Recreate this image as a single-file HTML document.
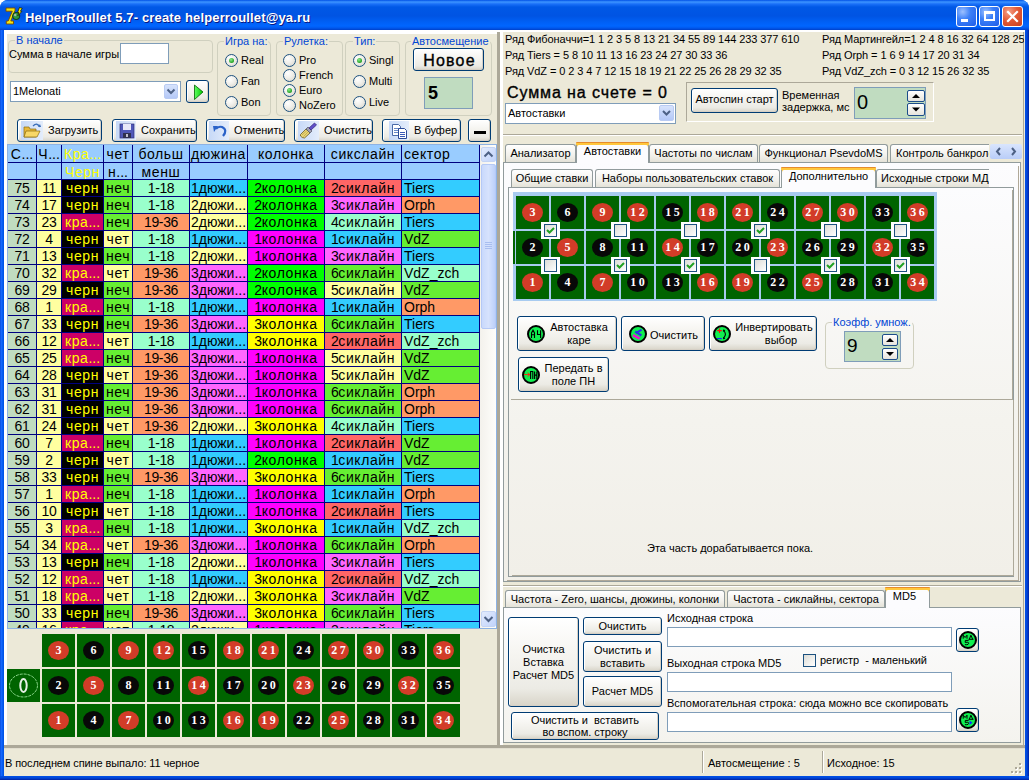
<!DOCTYPE html><html><head><meta charset="utf-8"><style>
*{box-sizing:border-box;margin:0;padding:0}
html,body{width:1029px;height:780px;overflow:hidden;background:#fff;font-family:'Liberation Sans',sans-serif}
.t{position:absolute;white-space:pre;font-family:'Liberation Sans',sans-serif;font-size:11px;line-height:13px}
.a{position:absolute}
.btn{position:absolute;border:1px solid #003C74;border-radius:3px;background:linear-gradient(#FFFFFF 0%,#F6F5F1 40%,#ECEBE5 80%,#D8D4C8 100%);box-shadow:inset -1px -1px 0 #D6D0C5, inset 1px 1px 0 #FFF}
.edit{position:absolute;border:1px solid #7F9DB9;background:#fff}
.grp{position:absolute;border:1px solid #D0D0BF;border-radius:4px}
.gt{position:absolute;white-space:pre;font-size:11px;line-height:13px;color:#0046D5;background:#ECE9D8;padding:0 1px}
.radio{position:absolute;width:13px;height:13px;border-radius:50%;border:1px solid #1C5180;background:radial-gradient(circle at 35% 30%,#FFFFFF 0%,#F0EFEA 45%,#D5D3C8 100%)}
.radio.on::after{content:'';position:absolute;left:3px;top:3px;width:5px;height:5px;border-radius:50%;background:radial-gradient(circle at 40% 35%,#8CEB8C,#21A121 70%,#1A8A1A)}
.combo-btn{position:absolute;border-radius:2px;background:linear-gradient(#D7E3FC,#B4C8F7);border:1px solid #B9CBF3}
.tab{position:absolute;border:1px solid #919B9C;border-bottom:none;border-radius:3px 3px 0 0;background:linear-gradient(#FFFFFF,#F2F1EC 60%,#E4E2D8);}
.tab.act{background:#FCFCFE;border-top:none;box-shadow:inset 0 3px 0 #FFC83C, inset 0 1px 0 #E68B2C}
.cell{position:absolute;width:33px;height:33px;background:#006400}
.chip{position:absolute;left:6px;top:7px;width:21px;height:19px;border-radius:50%}
.num{position:absolute;left:0;top:0px;width:33px;height:33px;text-align:center;color:#fff;font:bold 12px/33px 'Liberation Serif',serif;letter-spacing:2.5px;padding-left:2.5px}
.gc{position:absolute;white-space:pre;overflow:hidden;font-size:14px;line-height:16px;text-align:center}
.d{letter-spacing:-0.4px}
.cy{letter-spacing:0.6px}
</style></head><body><div class="a" style="left:0;top:0;width:1029px;height:780px;border-radius:8px 8px 0 0;overflow:hidden;background:#0055E5">
<div style="position:absolute;left:0px;top:0px;width:1029px;height:30px;background:linear-gradient(#0050E6 0px,#3D95FF 2px,#1A70F8 4px,#0058E6 7px,#0054E3 16px,#0060F5 22px,#0066FF 26px,#0058EE 28px,#0040C8 30px)"></div>
<div style="position:absolute;left:0px;top:30px;width:4px;height:750px;background:linear-gradient(to right,#0040D0,#1C6CFF 1px,#0058EE 3px,#0050E0)"></div>
<div style="position:absolute;left:1025px;top:30px;width:4px;height:750px;background:linear-gradient(to right,#0050E8,#0046D8 2px,#001FA0 4px)"></div>
<div style="position:absolute;left:0px;top:776px;width:1029px;height:4px;background:linear-gradient(#0050E8,#0046D8 2px,#0020A0 4px)"></div>
</div>
<svg class="a" style="left:0;top:0" width="30" height="30" viewBox="0 0 30 30">
<path d="M6 8 H15 V10.5 L10.8 21 H13.5 V24 H6.3 V21 H8.2 L12.3 11.2 H6 Z" fill="#F4E410" stroke="#7A4A00" stroke-width="0.9"/>
<circle cx="16.2" cy="16" r="3.6" fill="#2E9A3E" stroke="#102A10" stroke-width="0.9"/>
<circle cx="15.2" cy="15" r="1.2" fill="#A8B8A8"/>
<path d="M19.5 7.5 L22.2 8.3 L20.4 11.2 L21.8 11.5 L17.8 15.8 L19 12.6 L17.6 12.4 Z" fill="#FFF000" stroke="#101000" stroke-width="0.7"/>
</svg>
<div class="t" style="left:26px;top:11px;font:bold 13px/16px 'Liberation Sans';letter-spacing:0.15px;color:#0A1883">HelperRoullet 5.7- create helperroullet@ya.ru</div>
<div class="t" style="left:25px;top:10px;font:bold 13px/16px 'Liberation Sans';letter-spacing:0.15px;color:#fff">HelperRoullet 5.7- create helperroullet@ya.ru</div>
<div style="position:absolute;left:956px;top:6px;width:21px;height:21px;border:1px solid #fff;border-radius:3px;background:radial-gradient(circle at 30% 25%,#9CC0FF 0%,#3C80F8 40%,#1E5CE8 100%)"></div>
<div style="position:absolute;left:979px;top:6px;width:21px;height:21px;border:1px solid #fff;border-radius:3px;background:radial-gradient(circle at 30% 25%,#9CC0FF 0%,#3C80F8 40%,#1E5CE8 100%)"></div>
<div style="position:absolute;left:1002px;top:6px;width:21px;height:21px;border:1px solid #fff;border-radius:3px;background:radial-gradient(circle at 30% 25%,#F4A088 0%,#E35A36 45%,#C8401E 100%)"></div>
<div style="position:absolute;left:961px;top:19px;width:7px;height:3px;background:#fff"></div>
<div style="position:absolute;left:984px;top:11px;width:11px;height:10px;border:2px solid #fff;border-top-width:3px"></div>
<svg class="a" style="left:1002px;top:6px" width="21" height="21"><path d="M6 6 L15 15 M15 6 L6 15" stroke="#fff" stroke-width="2.2" stroke-linecap="square"/></svg>
<div style="position:absolute;left:4px;top:30px;width:1021px;height:746px;background:#ECE9D8"></div>
<div style="position:absolute;left:4px;top:30px;width:496px;height:4px;background:#FFFFFF"></div>
<div style="position:absolute;left:4px;top:30px;width:3px;height:718px;background:#FFFFFF"></div>
<div style="position:absolute;left:497px;top:32px;width:3px;height:716px;background:#ACA899"></div>
<div style="position:absolute;left:4px;top:745px;width:496px;height:3px;background:#ACA899"></div>
<div style="position:absolute;left:500px;top:30px;width:525px;height:2px;background:#FFFFFF"></div>
<div style="position:absolute;left:500px;top:30px;width:3px;height:718px;background:#FFFFFF"></div>
<div style="position:absolute;left:1023px;top:32px;width:1px;height:716px;background:#ACA899"></div>
<div style="position:absolute;left:500px;top:745px;width:525px;height:3px;background:#ACA899"></div>
<div class="grp" style="left:8px;top:40px;width:205px;height:33px"></div>
<div class="gt" style="left:15px;top:34px">В начале</div>
<div class="t" style="left:9px;top:48px;font-size:11px;line-height:13px;color:#000;font-weight:normal;">Сумма в начале игры</div>
<div class="edit" style="left:120px;top:43px;width:49px;height:21px"></div>
<div class="edit" style="left:10px;top:81px;width:171px;height:21px"></div>
<div class="t" style="left:13px;top:85px;font-size:11px;line-height:13px;color:#000;font-weight:normal;">1Melonati</div>
<div class="combo-btn" style="left:164px;top:84px;width:14px;height:15px"></div>
<svg class="a" style="left:164px;top:84px" width="14" height="15"><path d="M3.5 5.5 L7.0 9.0 L10.5 5.5" fill="none" stroke="#4D6185" stroke-width="2"/></svg>
<div class="btn" style="left:186px;top:80px;width:23px;height:23px"></div>
<svg class="a" style="left:186px;top:80px" width="23" height="23"><defs><linearGradient id="pg" x1="0" x2="1"><stop offset="0" stop-color="#60FF60"/><stop offset="1" stop-color="#00C800"/></linearGradient></defs><path d="M8.5 5 L17 12 L8.5 19.5 Z" fill="url(#pg)" stroke="#006000" stroke-width="0.8"/></svg>
<div class="grp" style="left:217px;top:41px;width:54px;height:75px"></div>
<div class="gt" style="left:224px;top:35px">Игра на:</div>
<div class="radio on" style="left:225px;top:54px"></div>
<div class="t" style="left:241px;top:54px;font-size:11px;line-height:13px;color:#000;font-weight:normal;">Real</div>
<div class="radio" style="left:225px;top:75px"></div>
<div class="t" style="left:241px;top:75px;font-size:11px;line-height:13px;color:#000;font-weight:normal;">Fan</div>
<div class="radio" style="left:225px;top:96px"></div>
<div class="t" style="left:241px;top:96px;font-size:11px;line-height:13px;color:#000;font-weight:normal;">Bon</div>
<div class="grp" style="left:276px;top:41px;width:67px;height:75px"></div>
<div class="gt" style="left:283px;top:35px">Рулетка:</div>
<div class="radio" style="left:283px;top:54px"></div>
<div class="t" style="left:299px;top:54px;font-size:11px;line-height:13px;color:#000;font-weight:normal;">Pro</div>
<div class="radio" style="left:283px;top:69px"></div>
<div class="t" style="left:299px;top:69px;font-size:11px;line-height:13px;color:#000;font-weight:normal;">French</div>
<div class="radio on" style="left:283px;top:84px"></div>
<div class="t" style="left:299px;top:84px;font-size:11px;line-height:13px;color:#000;font-weight:normal;">Euro</div>
<div class="radio" style="left:283px;top:99px"></div>
<div class="t" style="left:299px;top:99px;font-size:11px;line-height:13px;color:#000;font-weight:normal;">NoZero</div>
<div class="grp" style="left:345px;top:41px;width:55px;height:75px"></div>
<div class="gt" style="left:353px;top:35px">Тип:</div>
<div class="radio on" style="left:353px;top:54px"></div>
<div class="t" style="left:369px;top:54px;font-size:11px;line-height:13px;color:#000;font-weight:normal;">Singl</div>
<div class="radio" style="left:353px;top:75px"></div>
<div class="t" style="left:369px;top:75px;font-size:11px;line-height:13px;color:#000;font-weight:normal;">Multi</div>
<div class="radio" style="left:353px;top:96px"></div>
<div class="t" style="left:369px;top:96px;font-size:11px;line-height:13px;color:#000;font-weight:normal;">Live</div>
<div class="grp" style="left:405px;top:41px;width:87px;height:75px"></div>
<div class="gt" style="left:411px;top:35px">Автосмещение</div>
<div class="btn" style="left:413px;top:48px;width:71px;height:23px"></div>
<div class="t" style="left:413px;top:51px;width:71px;text-align:center;font:16px/20px 'Liberation Sans';letter-spacing:1.2px;padding-left:2px;-webkit-text-stroke:0.35px #000">Новое</div>
<div class="a" style="left:424px;top:77px;width:49px;height:32px;background:#C0DCC0;border:1px solid #7F9DB9"></div>
<div class="t" style="left:428px;top:83px;font:bold 18px/20px 'Liberation Sans'">5</div>
<div class="btn" style="left:17px;top:119px;width:85px;height:23px"></div>
<div class="a" style="left:21px;top:121px;width:22px;height:19px;background:linear-gradient(to right,#C7D9F7,#E4EDFB)"></div>
<svg class="a" style="left:21px;top:121px" width="22" height="19"><path d="M3 6 L8 6 L9 8 L15 8 L15 16 L3 16 Z" fill="#E8B83A" stroke="#8A6A10" stroke-width="0.7"/><path d="M5 10 L19 10 L16 16 L3 16 Z" fill="#F8D868" stroke="#8A6A10" stroke-width="0.7"/><path d="M12 5 Q16 1 19 6" fill="none" stroke="#3A6EB8" stroke-width="1.3"/><path d="M17 6 L20 6 L19 3" fill="#3A6EB8"/></svg>
<div class="t" style="left:48px;top:124px;font-size:11px;line-height:13px;color:#000;font-weight:normal;">Загрузить</div>
<div class="btn" style="left:112px;top:119px;width:85px;height:23px"></div>
<div class="a" style="left:116px;top:121px;width:20px;height:19px;background:linear-gradient(to right,#C7D9F7,#E4EDFB)"></div>
<svg class="a" style="left:116px;top:121px" width="20" height="19"><rect x="4" y="3" width="14" height="14" fill="#5058B8" stroke="#30307A" stroke-width="0.7"/><rect x="7" y="3" width="8" height="6" fill="#E8E8F8"/><rect x="7" y="12" width="8" height="5" fill="#303050"/><rect x="10" y="13" width="2" height="3" fill="#C0C0D0"/></svg>
<div class="t" style="left:141px;top:124px;font-size:11px;line-height:13px;color:#000;font-weight:normal;">Сохранить</div>
<div class="btn" style="left:206px;top:119px;width:79px;height:23px"></div>
<div class="a" style="left:209px;top:121px;width:20px;height:19px;background:linear-gradient(to right,#C7D9F7,#E4EDFB)"></div>
<svg class="a" style="left:209px;top:121px" width="20" height="19"><path d="M14 15 Q19 9 13 6 Q9 5 7 8" fill="none" stroke="#2A62C8" stroke-width="2.2"/><path d="M4 5 L9 5 L5 11 Z" fill="#2A62C8"/></svg>
<div class="t" style="left:234px;top:124px;font-size:11px;line-height:13px;color:#000;font-weight:normal;">Отменить</div>
<div class="btn" style="left:294px;top:119px;width:79px;height:23px"></div>
<div class="a" style="left:298px;top:121px;width:21px;height:19px;background:linear-gradient(to right,#C7D9F7,#E4EDFB)"></div>
<svg class="a" style="left:298px;top:121px" width="21" height="19"><path d="M2.5 13.5 L8 8 L12 12 L6.5 17 Q4 17 2.5 15 Z" fill="#E8D478" stroke="#6A5A20" stroke-width="0.8"/><path d="M4 14 L9 9.5 M5.5 15.5 L10 11" stroke="#B8A040" stroke-width="0.7"/><path d="M8 8 L10 6 L14 10 L12 12 Z" fill="#A0A0B0" stroke="#505060" stroke-width="0.7"/><path d="M11 7 L16.5 2 L18.5 4 L13 9 Z" fill="#6050C8" stroke="#302080" stroke-width="0.7"/></svg>
<div class="t" style="left:324px;top:124px;font-size:11px;line-height:13px;color:#000;font-weight:normal;">Очистить</div>
<div class="btn" style="left:382px;top:119px;width:79px;height:23px"></div>
<div class="a" style="left:389px;top:121px;width:20px;height:19px;background:linear-gradient(to right,#C7D9F7,#E4EDFB)"></div>
<svg class="a" style="left:389px;top:121px" width="20" height="19"><path d="M3.5 3.5 H9.5 L11.5 5.5 V14.5 H3.5 Z" fill="#fff" stroke="#4A6AA8" stroke-width="1"/><path d="M5 7.5 H10 M5 9.5 H10 M5 11.5 H10" stroke="#6A8AC8" stroke-width="1"/><path d="M9.5 7.5 H15.5 L17.5 9.5 V17.5 H9.5 Z" fill="#fff" stroke="#2A4A98" stroke-width="1"/><path d="M11 11.5 H16 M11 13.5 H16 M11 15.5 H16" stroke="#3A5AB8" stroke-width="1"/></svg>
<div class="t" style="left:414px;top:124px;font-size:11px;line-height:13px;color:#000;font-weight:normal;">В буфер</div>
<div class="btn" style="left:468px;top:119px;width:23px;height:23px"></div>
<div style="position:absolute;left:474px;top:131px;width:12px;height:3px;background:#000"></div>
<div class="a" style="left:7px;top:144px;width:490px;height:485px;background:#F4F3EE;border:1px solid #8DB2E3;overflow:hidden">
</div>
<div style="position:absolute;left:8px;top:145px;width:471px;height:34px;background:#99CCFF"></div>
<div class="gc" style="left:8px;top:145px;width:28px;height:17px;background:#99CCFF;color:#000;text-align:center;padding-top:1px;"><span class="cy">С</span>...</div>
<div class="gc" style="left:37px;top:145px;width:24px;height:17px;background:#99CCFF;color:#000;text-align:center;padding-top:1px;"><span class="cy">Ч</span>...</div>
<div class="gc" style="left:62px;top:145px;width:41px;height:17px;background:#99CCFF;color:#FFFF00;text-align:center;padding-top:1px;"><span class="cy">Кра</span>...</div>
<div class="gc" style="left:104px;top:145px;width:28px;height:17px;background:#99CCFF;color:#000;text-align:center;padding-top:1px;"><span class="cy">чет</span></div>
<div class="gc" style="left:133px;top:145px;width:56px;height:17px;background:#99CCFF;color:#000;text-align:center;padding-top:1px;"><span class="cy">больш</span></div>
<div class="gc" style="left:190px;top:145px;width:57px;height:17px;background:#99CCFF;color:#000;text-align:center;padding-top:1px;"><span class="cy">дюжина</span></div>
<div class="gc" style="left:248px;top:145px;width:76px;height:17px;background:#99CCFF;color:#000;text-align:center;padding-top:1px;"><span class="cy">колонка</span></div>
<div class="gc" style="left:325px;top:145px;width:76px;height:17px;background:#99CCFF;color:#000;text-align:center;padding-top:1px;"><span class="cy">сикслайн</span></div>
<div class="gc" style="left:402px;top:145px;width:77px;height:17px;background:#99CCFF;color:#000;text-align:left;padding-left:2px;padding-top:1px;"><span class="cy">сектор</span></div>
<div class="gc" style="left:8px;top:163px;width:28px;height:16px;background:#99CCFF;color:#000;text-align:center;padding-top:1px;"></div>
<div class="gc" style="left:37px;top:163px;width:24px;height:16px;background:#99CCFF;color:#000;text-align:center;padding-top:1px;"></div>
<div class="gc" style="left:62px;top:163px;width:41px;height:16px;background:#99CCFF;color:#FFFF00;text-align:center;padding-top:1px;"><span class="cy">Черн</span></div>
<div class="gc" style="left:104px;top:163px;width:28px;height:16px;background:#99CCFF;color:#000;text-align:center;padding-top:1px;"><span class="cy">н</span>...</div>
<div class="gc" style="left:133px;top:163px;width:56px;height:16px;background:#99CCFF;color:#000;text-align:center;padding-top:1px;"><span class="cy">менш</span></div>
<div class="gc" style="left:190px;top:163px;width:57px;height:16px;background:#99CCFF;color:#000;text-align:center;padding-top:1px;"></div>
<div class="gc" style="left:248px;top:163px;width:76px;height:16px;background:#99CCFF;color:#000;text-align:center;padding-top:1px;"></div>
<div class="gc" style="left:325px;top:163px;width:76px;height:16px;background:#99CCFF;color:#000;text-align:center;padding-top:1px;"></div>
<div class="gc" style="left:402px;top:163px;width:77px;height:16px;background:#99CCFF;color:#000;text-align:left;padding-left:2px;padding-top:1px;"></div>
<div class="gc" style="left:8px;top:180px;width:28px;height:16px;background:#C0DCC0;color:#000;text-align:center;"><span class="d">75</span></div>
<div class="gc" style="left:37px;top:180px;width:24px;height:16px;background:#FFFFA0;color:#000;text-align:center;"><span class="d">11</span></div>
<div class="gc" style="left:62px;top:180px;width:41px;height:16px;background:#000000;color:#FFFF00;text-align:center;"><span class="cy">черн</span></div>
<div class="gc" style="left:104px;top:180px;width:28px;height:16px;background:#66EE33;color:#000;text-align:center;"><span class="cy">неч</span></div>
<div class="gc" style="left:133px;top:180px;width:56px;height:16px;background:#99FFCC;color:#000;text-align:center;"><span class="d">1-18</span></div>
<div class="gc" style="left:190px;top:180px;width:57px;height:16px;background:#33CCFF;color:#000;text-align:center;">1дюжи...</div>
<div class="gc" style="left:248px;top:180px;width:76px;height:16px;background:#00FF00;color:#000;text-align:center;"><span class="d">2</span><span class="cy">колонка</span></div>
<div class="gc" style="left:325px;top:180px;width:76px;height:16px;background:#FF6666;color:#000;text-align:center;"><span class="d">2</span><span class="cy">сиклайн</span></div>
<div class="gc" style="left:402px;top:180px;width:77px;height:16px;background:#33CCFF;color:#000;text-align:left;padding-left:2px;">Tiers</div>
<div class="gc" style="left:8px;top:197px;width:28px;height:16px;background:#C0DCC0;color:#000;text-align:center;"><span class="d">74</span></div>
<div class="gc" style="left:37px;top:197px;width:24px;height:16px;background:#FFFFA0;color:#000;text-align:center;"><span class="d">17</span></div>
<div class="gc" style="left:62px;top:197px;width:41px;height:16px;background:#000000;color:#FFFF00;text-align:center;"><span class="cy">черн</span></div>
<div class="gc" style="left:104px;top:197px;width:28px;height:16px;background:#66EE33;color:#000;text-align:center;"><span class="cy">неч</span></div>
<div class="gc" style="left:133px;top:197px;width:56px;height:16px;background:#99FFCC;color:#000;text-align:center;"><span class="d">1-18</span></div>
<div class="gc" style="left:190px;top:197px;width:57px;height:16px;background:#FFFFA0;color:#000;text-align:center;">2дюжи...</div>
<div class="gc" style="left:248px;top:197px;width:76px;height:16px;background:#00FF00;color:#000;text-align:center;"><span class="d">2</span><span class="cy">колонка</span></div>
<div class="gc" style="left:325px;top:197px;width:76px;height:16px;background:#FF66FF;color:#000;text-align:center;"><span class="d">3</span><span class="cy">сиклайн</span></div>
<div class="gc" style="left:402px;top:197px;width:77px;height:16px;background:#FF9966;color:#000;text-align:left;padding-left:2px;">Orph</div>
<div class="gc" style="left:8px;top:214px;width:28px;height:16px;background:#C0DCC0;color:#000;text-align:center;"><span class="d">73</span></div>
<div class="gc" style="left:37px;top:214px;width:24px;height:16px;background:#FFFFA0;color:#000;text-align:center;"><span class="d">23</span></div>
<div class="gc" style="left:62px;top:214px;width:41px;height:16px;background:#CC0066;color:#FFFF00;text-align:center;"><span class="cy">кра</span>...</div>
<div class="gc" style="left:104px;top:214px;width:28px;height:16px;background:#66EE33;color:#000;text-align:center;"><span class="cy">неч</span></div>
<div class="gc" style="left:133px;top:214px;width:56px;height:16px;background:#FF9966;color:#000;text-align:center;"><span class="d">19-36</span></div>
<div class="gc" style="left:190px;top:214px;width:57px;height:16px;background:#FFFFA0;color:#000;text-align:center;">2дюжи...</div>
<div class="gc" style="left:248px;top:214px;width:76px;height:16px;background:#00FF00;color:#000;text-align:center;"><span class="d">2</span><span class="cy">колонка</span></div>
<div class="gc" style="left:325px;top:214px;width:76px;height:16px;background:#99FFCC;color:#000;text-align:center;"><span class="d">4</span><span class="cy">сиклайн</span></div>
<div class="gc" style="left:402px;top:214px;width:77px;height:16px;background:#33CCFF;color:#000;text-align:left;padding-left:2px;">Tiers</div>
<div class="gc" style="left:8px;top:231px;width:28px;height:16px;background:#C0DCC0;color:#000;text-align:center;"><span class="d">72</span></div>
<div class="gc" style="left:37px;top:231px;width:24px;height:16px;background:#FFFFA0;color:#000;text-align:center;"><span class="d">4</span></div>
<div class="gc" style="left:62px;top:231px;width:41px;height:16px;background:#000000;color:#FFFF00;text-align:center;"><span class="cy">черн</span></div>
<div class="gc" style="left:104px;top:231px;width:28px;height:16px;background:#FFFFA0;color:#000;text-align:center;"><span class="cy">чет</span></div>
<div class="gc" style="left:133px;top:231px;width:56px;height:16px;background:#99FFCC;color:#000;text-align:center;"><span class="d">1-18</span></div>
<div class="gc" style="left:190px;top:231px;width:57px;height:16px;background:#33CCFF;color:#000;text-align:center;">1дюжи...</div>
<div class="gc" style="left:248px;top:231px;width:76px;height:16px;background:#FF00FF;color:#000;text-align:center;"><span class="d">1</span><span class="cy">колонка</span></div>
<div class="gc" style="left:325px;top:231px;width:76px;height:16px;background:#33CCFF;color:#000;text-align:center;"><span class="d">1</span><span class="cy">сиклайн</span></div>
<div class="gc" style="left:402px;top:231px;width:77px;height:16px;background:#66EE33;color:#000;text-align:left;padding-left:2px;">VdZ</div>
<div class="gc" style="left:8px;top:248px;width:28px;height:16px;background:#C0DCC0;color:#000;text-align:center;"><span class="d">71</span></div>
<div class="gc" style="left:37px;top:248px;width:24px;height:16px;background:#FFFFA0;color:#000;text-align:center;"><span class="d">13</span></div>
<div class="gc" style="left:62px;top:248px;width:41px;height:16px;background:#000000;color:#FFFF00;text-align:center;"><span class="cy">черн</span></div>
<div class="gc" style="left:104px;top:248px;width:28px;height:16px;background:#66EE33;color:#000;text-align:center;"><span class="cy">неч</span></div>
<div class="gc" style="left:133px;top:248px;width:56px;height:16px;background:#99FFCC;color:#000;text-align:center;"><span class="d">1-18</span></div>
<div class="gc" style="left:190px;top:248px;width:57px;height:16px;background:#FFFFA0;color:#000;text-align:center;">2дюжи...</div>
<div class="gc" style="left:248px;top:248px;width:76px;height:16px;background:#FF00FF;color:#000;text-align:center;"><span class="d">1</span><span class="cy">колонка</span></div>
<div class="gc" style="left:325px;top:248px;width:76px;height:16px;background:#FF66FF;color:#000;text-align:center;"><span class="d">3</span><span class="cy">сиклайн</span></div>
<div class="gc" style="left:402px;top:248px;width:77px;height:16px;background:#33CCFF;color:#000;text-align:left;padding-left:2px;">Tiers</div>
<div class="gc" style="left:8px;top:265px;width:28px;height:16px;background:#C0DCC0;color:#000;text-align:center;"><span class="d">70</span></div>
<div class="gc" style="left:37px;top:265px;width:24px;height:16px;background:#FFFFA0;color:#000;text-align:center;"><span class="d">32</span></div>
<div class="gc" style="left:62px;top:265px;width:41px;height:16px;background:#CC0066;color:#FFFF00;text-align:center;"><span class="cy">кра</span>...</div>
<div class="gc" style="left:104px;top:265px;width:28px;height:16px;background:#FFFFA0;color:#000;text-align:center;"><span class="cy">чет</span></div>
<div class="gc" style="left:133px;top:265px;width:56px;height:16px;background:#FF9966;color:#000;text-align:center;"><span class="d">19-36</span></div>
<div class="gc" style="left:190px;top:265px;width:57px;height:16px;background:#FF66FF;color:#000;text-align:center;">3дюжи...</div>
<div class="gc" style="left:248px;top:265px;width:76px;height:16px;background:#00FF00;color:#000;text-align:center;"><span class="d">2</span><span class="cy">колонка</span></div>
<div class="gc" style="left:325px;top:265px;width:76px;height:16px;background:#66EE33;color:#000;text-align:center;"><span class="d">6</span><span class="cy">сиклайн</span></div>
<div class="gc" style="left:402px;top:265px;width:77px;height:16px;background:#99FFCC;color:#000;text-align:left;padding-left:2px;">VdZ_zch</div>
<div class="gc" style="left:8px;top:282px;width:28px;height:16px;background:#C0DCC0;color:#000;text-align:center;"><span class="d">69</span></div>
<div class="gc" style="left:37px;top:282px;width:24px;height:16px;background:#FFFFA0;color:#000;text-align:center;"><span class="d">29</span></div>
<div class="gc" style="left:62px;top:282px;width:41px;height:16px;background:#000000;color:#FFFF00;text-align:center;"><span class="cy">черн</span></div>
<div class="gc" style="left:104px;top:282px;width:28px;height:16px;background:#66EE33;color:#000;text-align:center;"><span class="cy">неч</span></div>
<div class="gc" style="left:133px;top:282px;width:56px;height:16px;background:#FF9966;color:#000;text-align:center;"><span class="d">19-36</span></div>
<div class="gc" style="left:190px;top:282px;width:57px;height:16px;background:#FF66FF;color:#000;text-align:center;">3дюжи...</div>
<div class="gc" style="left:248px;top:282px;width:76px;height:16px;background:#00FF00;color:#000;text-align:center;"><span class="d">2</span><span class="cy">колонка</span></div>
<div class="gc" style="left:325px;top:282px;width:76px;height:16px;background:#FFFFA0;color:#000;text-align:center;"><span class="d">5</span><span class="cy">сиклайн</span></div>
<div class="gc" style="left:402px;top:282px;width:77px;height:16px;background:#66EE33;color:#000;text-align:left;padding-left:2px;">VdZ</div>
<div class="gc" style="left:8px;top:299px;width:28px;height:16px;background:#C0DCC0;color:#000;text-align:center;"><span class="d">68</span></div>
<div class="gc" style="left:37px;top:299px;width:24px;height:16px;background:#FFFFA0;color:#000;text-align:center;"><span class="d">1</span></div>
<div class="gc" style="left:62px;top:299px;width:41px;height:16px;background:#CC0066;color:#FFFF00;text-align:center;"><span class="cy">кра</span>...</div>
<div class="gc" style="left:104px;top:299px;width:28px;height:16px;background:#66EE33;color:#000;text-align:center;"><span class="cy">неч</span></div>
<div class="gc" style="left:133px;top:299px;width:56px;height:16px;background:#99FFCC;color:#000;text-align:center;"><span class="d">1-18</span></div>
<div class="gc" style="left:190px;top:299px;width:57px;height:16px;background:#33CCFF;color:#000;text-align:center;">1дюжи...</div>
<div class="gc" style="left:248px;top:299px;width:76px;height:16px;background:#FF00FF;color:#000;text-align:center;"><span class="d">1</span><span class="cy">колонка</span></div>
<div class="gc" style="left:325px;top:299px;width:76px;height:16px;background:#33CCFF;color:#000;text-align:center;"><span class="d">1</span><span class="cy">сиклайн</span></div>
<div class="gc" style="left:402px;top:299px;width:77px;height:16px;background:#FF9966;color:#000;text-align:left;padding-left:2px;">Orph</div>
<div class="gc" style="left:8px;top:316px;width:28px;height:16px;background:#C0DCC0;color:#000;text-align:center;"><span class="d">67</span></div>
<div class="gc" style="left:37px;top:316px;width:24px;height:16px;background:#FFFFA0;color:#000;text-align:center;"><span class="d">33</span></div>
<div class="gc" style="left:62px;top:316px;width:41px;height:16px;background:#000000;color:#FFFF00;text-align:center;"><span class="cy">черн</span></div>
<div class="gc" style="left:104px;top:316px;width:28px;height:16px;background:#66EE33;color:#000;text-align:center;"><span class="cy">неч</span></div>
<div class="gc" style="left:133px;top:316px;width:56px;height:16px;background:#FF9966;color:#000;text-align:center;"><span class="d">19-36</span></div>
<div class="gc" style="left:190px;top:316px;width:57px;height:16px;background:#FF66FF;color:#000;text-align:center;">3дюжи...</div>
<div class="gc" style="left:248px;top:316px;width:76px;height:16px;background:#FFFF00;color:#000;text-align:center;"><span class="d">3</span><span class="cy">колонка</span></div>
<div class="gc" style="left:325px;top:316px;width:76px;height:16px;background:#66EE33;color:#000;text-align:center;"><span class="d">6</span><span class="cy">сиклайн</span></div>
<div class="gc" style="left:402px;top:316px;width:77px;height:16px;background:#33CCFF;color:#000;text-align:left;padding-left:2px;">Tiers</div>
<div class="gc" style="left:8px;top:333px;width:28px;height:16px;background:#C0DCC0;color:#000;text-align:center;"><span class="d">66</span></div>
<div class="gc" style="left:37px;top:333px;width:24px;height:16px;background:#FFFFA0;color:#000;text-align:center;"><span class="d">12</span></div>
<div class="gc" style="left:62px;top:333px;width:41px;height:16px;background:#CC0066;color:#FFFF00;text-align:center;"><span class="cy">кра</span>...</div>
<div class="gc" style="left:104px;top:333px;width:28px;height:16px;background:#FFFFA0;color:#000;text-align:center;"><span class="cy">чет</span></div>
<div class="gc" style="left:133px;top:333px;width:56px;height:16px;background:#99FFCC;color:#000;text-align:center;"><span class="d">1-18</span></div>
<div class="gc" style="left:190px;top:333px;width:57px;height:16px;background:#33CCFF;color:#000;text-align:center;">1дюжи...</div>
<div class="gc" style="left:248px;top:333px;width:76px;height:16px;background:#FFFF00;color:#000;text-align:center;"><span class="d">3</span><span class="cy">колонка</span></div>
<div class="gc" style="left:325px;top:333px;width:76px;height:16px;background:#FF6666;color:#000;text-align:center;"><span class="d">2</span><span class="cy">сиклайн</span></div>
<div class="gc" style="left:402px;top:333px;width:77px;height:16px;background:#99FFCC;color:#000;text-align:left;padding-left:2px;">VdZ_zch</div>
<div class="gc" style="left:8px;top:350px;width:28px;height:16px;background:#C0DCC0;color:#000;text-align:center;"><span class="d">65</span></div>
<div class="gc" style="left:37px;top:350px;width:24px;height:16px;background:#FFFFA0;color:#000;text-align:center;"><span class="d">25</span></div>
<div class="gc" style="left:62px;top:350px;width:41px;height:16px;background:#CC0066;color:#FFFF00;text-align:center;"><span class="cy">кра</span>...</div>
<div class="gc" style="left:104px;top:350px;width:28px;height:16px;background:#66EE33;color:#000;text-align:center;"><span class="cy">неч</span></div>
<div class="gc" style="left:133px;top:350px;width:56px;height:16px;background:#FF9966;color:#000;text-align:center;"><span class="d">19-36</span></div>
<div class="gc" style="left:190px;top:350px;width:57px;height:16px;background:#FF66FF;color:#000;text-align:center;">3дюжи...</div>
<div class="gc" style="left:248px;top:350px;width:76px;height:16px;background:#FF00FF;color:#000;text-align:center;"><span class="d">1</span><span class="cy">колонка</span></div>
<div class="gc" style="left:325px;top:350px;width:76px;height:16px;background:#FFFFA0;color:#000;text-align:center;"><span class="d">5</span><span class="cy">сиклайн</span></div>
<div class="gc" style="left:402px;top:350px;width:77px;height:16px;background:#66EE33;color:#000;text-align:left;padding-left:2px;">VdZ</div>
<div class="gc" style="left:8px;top:367px;width:28px;height:16px;background:#C0DCC0;color:#000;text-align:center;"><span class="d">64</span></div>
<div class="gc" style="left:37px;top:367px;width:24px;height:16px;background:#FFFFA0;color:#000;text-align:center;"><span class="d">28</span></div>
<div class="gc" style="left:62px;top:367px;width:41px;height:16px;background:#000000;color:#FFFF00;text-align:center;"><span class="cy">черн</span></div>
<div class="gc" style="left:104px;top:367px;width:28px;height:16px;background:#FFFFA0;color:#000;text-align:center;"><span class="cy">чет</span></div>
<div class="gc" style="left:133px;top:367px;width:56px;height:16px;background:#FF9966;color:#000;text-align:center;"><span class="d">19-36</span></div>
<div class="gc" style="left:190px;top:367px;width:57px;height:16px;background:#FF66FF;color:#000;text-align:center;">3дюжи...</div>
<div class="gc" style="left:248px;top:367px;width:76px;height:16px;background:#FF00FF;color:#000;text-align:center;"><span class="d">1</span><span class="cy">колонка</span></div>
<div class="gc" style="left:325px;top:367px;width:76px;height:16px;background:#FFFFA0;color:#000;text-align:center;"><span class="d">5</span><span class="cy">сиклайн</span></div>
<div class="gc" style="left:402px;top:367px;width:77px;height:16px;background:#66EE33;color:#000;text-align:left;padding-left:2px;">VdZ</div>
<div class="gc" style="left:8px;top:384px;width:28px;height:16px;background:#C0DCC0;color:#000;text-align:center;"><span class="d">63</span></div>
<div class="gc" style="left:37px;top:384px;width:24px;height:16px;background:#FFFFA0;color:#000;text-align:center;"><span class="d">31</span></div>
<div class="gc" style="left:62px;top:384px;width:41px;height:16px;background:#000000;color:#FFFF00;text-align:center;"><span class="cy">черн</span></div>
<div class="gc" style="left:104px;top:384px;width:28px;height:16px;background:#66EE33;color:#000;text-align:center;"><span class="cy">неч</span></div>
<div class="gc" style="left:133px;top:384px;width:56px;height:16px;background:#FF9966;color:#000;text-align:center;"><span class="d">19-36</span></div>
<div class="gc" style="left:190px;top:384px;width:57px;height:16px;background:#FF66FF;color:#000;text-align:center;">3дюжи...</div>
<div class="gc" style="left:248px;top:384px;width:76px;height:16px;background:#FF00FF;color:#000;text-align:center;"><span class="d">1</span><span class="cy">колонка</span></div>
<div class="gc" style="left:325px;top:384px;width:76px;height:16px;background:#66EE33;color:#000;text-align:center;"><span class="d">6</span><span class="cy">сиклайн</span></div>
<div class="gc" style="left:402px;top:384px;width:77px;height:16px;background:#FF9966;color:#000;text-align:left;padding-left:2px;">Orph</div>
<div class="gc" style="left:8px;top:401px;width:28px;height:16px;background:#C0DCC0;color:#000;text-align:center;"><span class="d">62</span></div>
<div class="gc" style="left:37px;top:401px;width:24px;height:16px;background:#FFFFA0;color:#000;text-align:center;"><span class="d">31</span></div>
<div class="gc" style="left:62px;top:401px;width:41px;height:16px;background:#000000;color:#FFFF00;text-align:center;"><span class="cy">черн</span></div>
<div class="gc" style="left:104px;top:401px;width:28px;height:16px;background:#66EE33;color:#000;text-align:center;"><span class="cy">неч</span></div>
<div class="gc" style="left:133px;top:401px;width:56px;height:16px;background:#FF9966;color:#000;text-align:center;"><span class="d">19-36</span></div>
<div class="gc" style="left:190px;top:401px;width:57px;height:16px;background:#FF66FF;color:#000;text-align:center;">3дюжи...</div>
<div class="gc" style="left:248px;top:401px;width:76px;height:16px;background:#FF00FF;color:#000;text-align:center;"><span class="d">1</span><span class="cy">колонка</span></div>
<div class="gc" style="left:325px;top:401px;width:76px;height:16px;background:#66EE33;color:#000;text-align:center;"><span class="d">6</span><span class="cy">сиклайн</span></div>
<div class="gc" style="left:402px;top:401px;width:77px;height:16px;background:#FF9966;color:#000;text-align:left;padding-left:2px;">Orph</div>
<div class="gc" style="left:8px;top:418px;width:28px;height:16px;background:#C0DCC0;color:#000;text-align:center;"><span class="d">61</span></div>
<div class="gc" style="left:37px;top:418px;width:24px;height:16px;background:#FFFFA0;color:#000;text-align:center;"><span class="d">24</span></div>
<div class="gc" style="left:62px;top:418px;width:41px;height:16px;background:#000000;color:#FFFF00;text-align:center;"><span class="cy">черн</span></div>
<div class="gc" style="left:104px;top:418px;width:28px;height:16px;background:#FFFFA0;color:#000;text-align:center;"><span class="cy">чет</span></div>
<div class="gc" style="left:133px;top:418px;width:56px;height:16px;background:#FF9966;color:#000;text-align:center;"><span class="d">19-36</span></div>
<div class="gc" style="left:190px;top:418px;width:57px;height:16px;background:#FFFFA0;color:#000;text-align:center;">2дюжи...</div>
<div class="gc" style="left:248px;top:418px;width:76px;height:16px;background:#FFFF00;color:#000;text-align:center;"><span class="d">3</span><span class="cy">колонка</span></div>
<div class="gc" style="left:325px;top:418px;width:76px;height:16px;background:#99FFCC;color:#000;text-align:center;"><span class="d">4</span><span class="cy">сиклайн</span></div>
<div class="gc" style="left:402px;top:418px;width:77px;height:16px;background:#33CCFF;color:#000;text-align:left;padding-left:2px;">Tiers</div>
<div class="gc" style="left:8px;top:435px;width:28px;height:16px;background:#C0DCC0;color:#000;text-align:center;"><span class="d">60</span></div>
<div class="gc" style="left:37px;top:435px;width:24px;height:16px;background:#FFFFA0;color:#000;text-align:center;"><span class="d">7</span></div>
<div class="gc" style="left:62px;top:435px;width:41px;height:16px;background:#CC0066;color:#FFFF00;text-align:center;"><span class="cy">кра</span>...</div>
<div class="gc" style="left:104px;top:435px;width:28px;height:16px;background:#66EE33;color:#000;text-align:center;"><span class="cy">неч</span></div>
<div class="gc" style="left:133px;top:435px;width:56px;height:16px;background:#99FFCC;color:#000;text-align:center;"><span class="d">1-18</span></div>
<div class="gc" style="left:190px;top:435px;width:57px;height:16px;background:#33CCFF;color:#000;text-align:center;">1дюжи...</div>
<div class="gc" style="left:248px;top:435px;width:76px;height:16px;background:#FF00FF;color:#000;text-align:center;"><span class="d">1</span><span class="cy">колонка</span></div>
<div class="gc" style="left:325px;top:435px;width:76px;height:16px;background:#FF6666;color:#000;text-align:center;"><span class="d">2</span><span class="cy">сиклайн</span></div>
<div class="gc" style="left:402px;top:435px;width:77px;height:16px;background:#66EE33;color:#000;text-align:left;padding-left:2px;">VdZ</div>
<div class="gc" style="left:8px;top:452px;width:28px;height:16px;background:#C0DCC0;color:#000;text-align:center;"><span class="d">59</span></div>
<div class="gc" style="left:37px;top:452px;width:24px;height:16px;background:#FFFFA0;color:#000;text-align:center;"><span class="d">2</span></div>
<div class="gc" style="left:62px;top:452px;width:41px;height:16px;background:#000000;color:#FFFF00;text-align:center;"><span class="cy">черн</span></div>
<div class="gc" style="left:104px;top:452px;width:28px;height:16px;background:#FFFFA0;color:#000;text-align:center;"><span class="cy">чет</span></div>
<div class="gc" style="left:133px;top:452px;width:56px;height:16px;background:#99FFCC;color:#000;text-align:center;"><span class="d">1-18</span></div>
<div class="gc" style="left:190px;top:452px;width:57px;height:16px;background:#33CCFF;color:#000;text-align:center;">1дюжи...</div>
<div class="gc" style="left:248px;top:452px;width:76px;height:16px;background:#00FF00;color:#000;text-align:center;"><span class="d">2</span><span class="cy">колонка</span></div>
<div class="gc" style="left:325px;top:452px;width:76px;height:16px;background:#33CCFF;color:#000;text-align:center;"><span class="d">1</span><span class="cy">сиклайн</span></div>
<div class="gc" style="left:402px;top:452px;width:77px;height:16px;background:#66EE33;color:#000;text-align:left;padding-left:2px;">VdZ</div>
<div class="gc" style="left:8px;top:469px;width:28px;height:16px;background:#C0DCC0;color:#000;text-align:center;"><span class="d">58</span></div>
<div class="gc" style="left:37px;top:469px;width:24px;height:16px;background:#FFFFA0;color:#000;text-align:center;"><span class="d">33</span></div>
<div class="gc" style="left:62px;top:469px;width:41px;height:16px;background:#000000;color:#FFFF00;text-align:center;"><span class="cy">черн</span></div>
<div class="gc" style="left:104px;top:469px;width:28px;height:16px;background:#66EE33;color:#000;text-align:center;"><span class="cy">неч</span></div>
<div class="gc" style="left:133px;top:469px;width:56px;height:16px;background:#FF9966;color:#000;text-align:center;"><span class="d">19-36</span></div>
<div class="gc" style="left:190px;top:469px;width:57px;height:16px;background:#FF66FF;color:#000;text-align:center;">3дюжи...</div>
<div class="gc" style="left:248px;top:469px;width:76px;height:16px;background:#FFFF00;color:#000;text-align:center;"><span class="d">3</span><span class="cy">колонка</span></div>
<div class="gc" style="left:325px;top:469px;width:76px;height:16px;background:#66EE33;color:#000;text-align:center;"><span class="d">6</span><span class="cy">сиклайн</span></div>
<div class="gc" style="left:402px;top:469px;width:77px;height:16px;background:#33CCFF;color:#000;text-align:left;padding-left:2px;">Tiers</div>
<div class="gc" style="left:8px;top:486px;width:28px;height:16px;background:#C0DCC0;color:#000;text-align:center;"><span class="d">57</span></div>
<div class="gc" style="left:37px;top:486px;width:24px;height:16px;background:#FFFFA0;color:#000;text-align:center;"><span class="d">1</span></div>
<div class="gc" style="left:62px;top:486px;width:41px;height:16px;background:#CC0066;color:#FFFF00;text-align:center;"><span class="cy">кра</span>...</div>
<div class="gc" style="left:104px;top:486px;width:28px;height:16px;background:#66EE33;color:#000;text-align:center;"><span class="cy">неч</span></div>
<div class="gc" style="left:133px;top:486px;width:56px;height:16px;background:#99FFCC;color:#000;text-align:center;"><span class="d">1-18</span></div>
<div class="gc" style="left:190px;top:486px;width:57px;height:16px;background:#33CCFF;color:#000;text-align:center;">1дюжи...</div>
<div class="gc" style="left:248px;top:486px;width:76px;height:16px;background:#FF00FF;color:#000;text-align:center;"><span class="d">1</span><span class="cy">колонка</span></div>
<div class="gc" style="left:325px;top:486px;width:76px;height:16px;background:#33CCFF;color:#000;text-align:center;"><span class="d">1</span><span class="cy">сиклайн</span></div>
<div class="gc" style="left:402px;top:486px;width:77px;height:16px;background:#FF9966;color:#000;text-align:left;padding-left:2px;">Orph</div>
<div class="gc" style="left:8px;top:503px;width:28px;height:16px;background:#C0DCC0;color:#000;text-align:center;"><span class="d">56</span></div>
<div class="gc" style="left:37px;top:503px;width:24px;height:16px;background:#FFFFA0;color:#000;text-align:center;"><span class="d">10</span></div>
<div class="gc" style="left:62px;top:503px;width:41px;height:16px;background:#000000;color:#FFFF00;text-align:center;"><span class="cy">черн</span></div>
<div class="gc" style="left:104px;top:503px;width:28px;height:16px;background:#FFFFA0;color:#000;text-align:center;"><span class="cy">чет</span></div>
<div class="gc" style="left:133px;top:503px;width:56px;height:16px;background:#99FFCC;color:#000;text-align:center;"><span class="d">1-18</span></div>
<div class="gc" style="left:190px;top:503px;width:57px;height:16px;background:#33CCFF;color:#000;text-align:center;">1дюжи...</div>
<div class="gc" style="left:248px;top:503px;width:76px;height:16px;background:#FF00FF;color:#000;text-align:center;"><span class="d">1</span><span class="cy">колонка</span></div>
<div class="gc" style="left:325px;top:503px;width:76px;height:16px;background:#FF6666;color:#000;text-align:center;"><span class="d">2</span><span class="cy">сиклайн</span></div>
<div class="gc" style="left:402px;top:503px;width:77px;height:16px;background:#33CCFF;color:#000;text-align:left;padding-left:2px;">Tiers</div>
<div class="gc" style="left:8px;top:520px;width:28px;height:16px;background:#C0DCC0;color:#000;text-align:center;"><span class="d">55</span></div>
<div class="gc" style="left:37px;top:520px;width:24px;height:16px;background:#FFFFA0;color:#000;text-align:center;"><span class="d">3</span></div>
<div class="gc" style="left:62px;top:520px;width:41px;height:16px;background:#CC0066;color:#FFFF00;text-align:center;"><span class="cy">кра</span>...</div>
<div class="gc" style="left:104px;top:520px;width:28px;height:16px;background:#66EE33;color:#000;text-align:center;"><span class="cy">неч</span></div>
<div class="gc" style="left:133px;top:520px;width:56px;height:16px;background:#99FFCC;color:#000;text-align:center;"><span class="d">1-18</span></div>
<div class="gc" style="left:190px;top:520px;width:57px;height:16px;background:#33CCFF;color:#000;text-align:center;">1дюжи...</div>
<div class="gc" style="left:248px;top:520px;width:76px;height:16px;background:#FFFF00;color:#000;text-align:center;"><span class="d">3</span><span class="cy">колонка</span></div>
<div class="gc" style="left:325px;top:520px;width:76px;height:16px;background:#33CCFF;color:#000;text-align:center;"><span class="d">1</span><span class="cy">сиклайн</span></div>
<div class="gc" style="left:402px;top:520px;width:77px;height:16px;background:#99FFCC;color:#000;text-align:left;padding-left:2px;">VdZ_zch</div>
<div class="gc" style="left:8px;top:537px;width:28px;height:16px;background:#C0DCC0;color:#000;text-align:center;"><span class="d">54</span></div>
<div class="gc" style="left:37px;top:537px;width:24px;height:16px;background:#FFFFA0;color:#000;text-align:center;"><span class="d">34</span></div>
<div class="gc" style="left:62px;top:537px;width:41px;height:16px;background:#CC0066;color:#FFFF00;text-align:center;"><span class="cy">кра</span>...</div>
<div class="gc" style="left:104px;top:537px;width:28px;height:16px;background:#FFFFA0;color:#000;text-align:center;"><span class="cy">чет</span></div>
<div class="gc" style="left:133px;top:537px;width:56px;height:16px;background:#FF9966;color:#000;text-align:center;"><span class="d">19-36</span></div>
<div class="gc" style="left:190px;top:537px;width:57px;height:16px;background:#FF66FF;color:#000;text-align:center;">3дюжи...</div>
<div class="gc" style="left:248px;top:537px;width:76px;height:16px;background:#FF00FF;color:#000;text-align:center;"><span class="d">1</span><span class="cy">колонка</span></div>
<div class="gc" style="left:325px;top:537px;width:76px;height:16px;background:#66EE33;color:#000;text-align:center;"><span class="d">6</span><span class="cy">сиклайн</span></div>
<div class="gc" style="left:402px;top:537px;width:77px;height:16px;background:#FF9966;color:#000;text-align:left;padding-left:2px;">Orph</div>
<div class="gc" style="left:8px;top:554px;width:28px;height:16px;background:#C0DCC0;color:#000;text-align:center;"><span class="d">53</span></div>
<div class="gc" style="left:37px;top:554px;width:24px;height:16px;background:#FFFFA0;color:#000;text-align:center;"><span class="d">13</span></div>
<div class="gc" style="left:62px;top:554px;width:41px;height:16px;background:#000000;color:#FFFF00;text-align:center;"><span class="cy">черн</span></div>
<div class="gc" style="left:104px;top:554px;width:28px;height:16px;background:#66EE33;color:#000;text-align:center;"><span class="cy">неч</span></div>
<div class="gc" style="left:133px;top:554px;width:56px;height:16px;background:#99FFCC;color:#000;text-align:center;"><span class="d">1-18</span></div>
<div class="gc" style="left:190px;top:554px;width:57px;height:16px;background:#FFFFA0;color:#000;text-align:center;">2дюжи...</div>
<div class="gc" style="left:248px;top:554px;width:76px;height:16px;background:#FF00FF;color:#000;text-align:center;"><span class="d">1</span><span class="cy">колонка</span></div>
<div class="gc" style="left:325px;top:554px;width:76px;height:16px;background:#FF66FF;color:#000;text-align:center;"><span class="d">3</span><span class="cy">сиклайн</span></div>
<div class="gc" style="left:402px;top:554px;width:77px;height:16px;background:#33CCFF;color:#000;text-align:left;padding-left:2px;">Tiers</div>
<div class="gc" style="left:8px;top:571px;width:28px;height:16px;background:#C0DCC0;color:#000;text-align:center;"><span class="d">52</span></div>
<div class="gc" style="left:37px;top:571px;width:24px;height:16px;background:#FFFFA0;color:#000;text-align:center;"><span class="d">12</span></div>
<div class="gc" style="left:62px;top:571px;width:41px;height:16px;background:#CC0066;color:#FFFF00;text-align:center;"><span class="cy">кра</span>...</div>
<div class="gc" style="left:104px;top:571px;width:28px;height:16px;background:#FFFFA0;color:#000;text-align:center;"><span class="cy">чет</span></div>
<div class="gc" style="left:133px;top:571px;width:56px;height:16px;background:#99FFCC;color:#000;text-align:center;"><span class="d">1-18</span></div>
<div class="gc" style="left:190px;top:571px;width:57px;height:16px;background:#33CCFF;color:#000;text-align:center;">1дюжи...</div>
<div class="gc" style="left:248px;top:571px;width:76px;height:16px;background:#FFFF00;color:#000;text-align:center;"><span class="d">3</span><span class="cy">колонка</span></div>
<div class="gc" style="left:325px;top:571px;width:76px;height:16px;background:#FF6666;color:#000;text-align:center;"><span class="d">2</span><span class="cy">сиклайн</span></div>
<div class="gc" style="left:402px;top:571px;width:77px;height:16px;background:#99FFCC;color:#000;text-align:left;padding-left:2px;">VdZ_zch</div>
<div class="gc" style="left:8px;top:588px;width:28px;height:16px;background:#C0DCC0;color:#000;text-align:center;"><span class="d">51</span></div>
<div class="gc" style="left:37px;top:588px;width:24px;height:16px;background:#FFFFA0;color:#000;text-align:center;"><span class="d">18</span></div>
<div class="gc" style="left:62px;top:588px;width:41px;height:16px;background:#CC0066;color:#FFFF00;text-align:center;"><span class="cy">кра</span>...</div>
<div class="gc" style="left:104px;top:588px;width:28px;height:16px;background:#FFFFA0;color:#000;text-align:center;"><span class="cy">чет</span></div>
<div class="gc" style="left:133px;top:588px;width:56px;height:16px;background:#99FFCC;color:#000;text-align:center;"><span class="d">1-18</span></div>
<div class="gc" style="left:190px;top:588px;width:57px;height:16px;background:#FFFFA0;color:#000;text-align:center;">2дюжи...</div>
<div class="gc" style="left:248px;top:588px;width:76px;height:16px;background:#FFFF00;color:#000;text-align:center;"><span class="d">3</span><span class="cy">колонка</span></div>
<div class="gc" style="left:325px;top:588px;width:76px;height:16px;background:#FF66FF;color:#000;text-align:center;"><span class="d">3</span><span class="cy">сиклайн</span></div>
<div class="gc" style="left:402px;top:588px;width:77px;height:16px;background:#66EE33;color:#000;text-align:left;padding-left:2px;">VdZ</div>
<div class="gc" style="left:8px;top:605px;width:28px;height:16px;background:#C0DCC0;color:#000;text-align:center;"><span class="d">50</span></div>
<div class="gc" style="left:37px;top:605px;width:24px;height:16px;background:#FFFFA0;color:#000;text-align:center;"><span class="d">33</span></div>
<div class="gc" style="left:62px;top:605px;width:41px;height:16px;background:#000000;color:#FFFF00;text-align:center;"><span class="cy">черн</span></div>
<div class="gc" style="left:104px;top:605px;width:28px;height:16px;background:#66EE33;color:#000;text-align:center;"><span class="cy">неч</span></div>
<div class="gc" style="left:133px;top:605px;width:56px;height:16px;background:#FF9966;color:#000;text-align:center;"><span class="d">19-36</span></div>
<div class="gc" style="left:190px;top:605px;width:57px;height:16px;background:#FF66FF;color:#000;text-align:center;">3дюжи...</div>
<div class="gc" style="left:248px;top:605px;width:76px;height:16px;background:#FFFF00;color:#000;text-align:center;"><span class="d">3</span><span class="cy">колонка</span></div>
<div class="gc" style="left:325px;top:605px;width:76px;height:16px;background:#66EE33;color:#000;text-align:center;"><span class="d">6</span><span class="cy">сиклайн</span></div>
<div class="gc" style="left:402px;top:605px;width:77px;height:16px;background:#33CCFF;color:#000;text-align:left;padding-left:2px;">Tiers</div>
<div class="gc" style="left:8px;top:622px;width:28px;height:6px;background:#C0DCC0;color:#000;text-align:center;"><span class="d">49</span></div>
<div class="gc" style="left:37px;top:622px;width:24px;height:6px;background:#FFFFA0;color:#000;text-align:center;"><span class="d">16</span></div>
<div class="gc" style="left:62px;top:622px;width:41px;height:6px;background:#CC0066;color:#FFFF00;text-align:center;"><span class="cy">кра</span>...</div>
<div class="gc" style="left:104px;top:622px;width:28px;height:6px;background:#FFFFA0;color:#000;text-align:center;"><span class="cy">чет</span></div>
<div class="gc" style="left:133px;top:622px;width:56px;height:6px;background:#99FFCC;color:#000;text-align:center;"><span class="d">1-18</span></div>
<div class="gc" style="left:190px;top:622px;width:57px;height:6px;background:#FFFFA0;color:#000;text-align:center;">2дюжи...</div>
<div class="gc" style="left:248px;top:622px;width:76px;height:6px;background:#FF00FF;color:#000;text-align:center;"><span class="d">1</span><span class="cy">колонка</span></div>
<div class="gc" style="left:325px;top:622px;width:76px;height:6px;background:#FF66FF;color:#000;text-align:center;"><span class="d">3</span><span class="cy">сиклайн</span></div>
<div class="gc" style="left:402px;top:622px;width:77px;height:6px;background:#33CCFF;color:#000;text-align:left;padding-left:2px;">Tiers</div>
<div style="position:absolute;left:36px;top:145px;width:1px;height:483px;background:#000080"></div>
<div style="position:absolute;left:61px;top:145px;width:1px;height:483px;background:#000080"></div>
<div style="position:absolute;left:103px;top:145px;width:1px;height:483px;background:#000080"></div>
<div style="position:absolute;left:132px;top:145px;width:1px;height:483px;background:#000080"></div>
<div style="position:absolute;left:189px;top:145px;width:1px;height:483px;background:#000080"></div>
<div style="position:absolute;left:247px;top:145px;width:1px;height:483px;background:#000080"></div>
<div style="position:absolute;left:324px;top:145px;width:1px;height:483px;background:#000080"></div>
<div style="position:absolute;left:401px;top:145px;width:1px;height:483px;background:#000080"></div>
<div style="position:absolute;left:479px;top:145px;width:1px;height:483px;background:#000080"></div>
<div style="position:absolute;left:8px;top:162px;width:471px;height:1px;background:#000080"></div>
<div style="position:absolute;left:8px;top:179px;width:471px;height:1px;background:#000080"></div>
<div style="position:absolute;left:8px;top:196px;width:471px;height:1px;background:#000080"></div>
<div style="position:absolute;left:8px;top:213px;width:471px;height:1px;background:#000080"></div>
<div style="position:absolute;left:8px;top:230px;width:471px;height:1px;background:#000080"></div>
<div style="position:absolute;left:8px;top:247px;width:471px;height:1px;background:#000080"></div>
<div style="position:absolute;left:8px;top:264px;width:471px;height:1px;background:#000080"></div>
<div style="position:absolute;left:8px;top:281px;width:471px;height:1px;background:#000080"></div>
<div style="position:absolute;left:8px;top:298px;width:471px;height:1px;background:#000080"></div>
<div style="position:absolute;left:8px;top:315px;width:471px;height:1px;background:#000080"></div>
<div style="position:absolute;left:8px;top:332px;width:471px;height:1px;background:#000080"></div>
<div style="position:absolute;left:8px;top:349px;width:471px;height:1px;background:#000080"></div>
<div style="position:absolute;left:8px;top:366px;width:471px;height:1px;background:#000080"></div>
<div style="position:absolute;left:8px;top:383px;width:471px;height:1px;background:#000080"></div>
<div style="position:absolute;left:8px;top:400px;width:471px;height:1px;background:#000080"></div>
<div style="position:absolute;left:8px;top:417px;width:471px;height:1px;background:#000080"></div>
<div style="position:absolute;left:8px;top:434px;width:471px;height:1px;background:#000080"></div>
<div style="position:absolute;left:8px;top:451px;width:471px;height:1px;background:#000080"></div>
<div style="position:absolute;left:8px;top:468px;width:471px;height:1px;background:#000080"></div>
<div style="position:absolute;left:8px;top:485px;width:471px;height:1px;background:#000080"></div>
<div style="position:absolute;left:8px;top:502px;width:471px;height:1px;background:#000080"></div>
<div style="position:absolute;left:8px;top:519px;width:471px;height:1px;background:#000080"></div>
<div style="position:absolute;left:8px;top:536px;width:471px;height:1px;background:#000080"></div>
<div style="position:absolute;left:8px;top:553px;width:471px;height:1px;background:#000080"></div>
<div style="position:absolute;left:8px;top:570px;width:471px;height:1px;background:#000080"></div>
<div style="position:absolute;left:8px;top:587px;width:471px;height:1px;background:#000080"></div>
<div style="position:absolute;left:8px;top:604px;width:471px;height:1px;background:#000080"></div>
<div style="position:absolute;left:8px;top:621px;width:471px;height:1px;background:#000080"></div>
<div style="position:absolute;left:480px;top:145px;width:16px;height:483px;background:linear-gradient(to right,#F3F1EC,#FEFEFB)"></div>
<div class="a" style="left:481px;top:147px;width:15px;height:15px;border-radius:2px;border:1px solid #C4D4F4;background:linear-gradient(135deg,#E2EBFD,#C1D3FB)"></div>
<svg class="a" style="left:481px;top:147px" width="15" height="15"><path d="M3.5 9.5 L7.5 5.5 L11.5 9.5" fill="none" stroke="#4D6185" stroke-width="2"/></svg>
<div class="a" style="left:481px;top:611px;width:15px;height:16px;border-radius:2px;border:1px solid #C4D4F4;background:linear-gradient(135deg,#E2EBFD,#C1D3FB)"></div>
<svg class="a" style="left:481px;top:611px" width="15" height="16"><path d="M3.5 6.0 L7.5 10.0 L11.5 6.0" fill="none" stroke="#4D6185" stroke-width="2"/></svg>
<div class="a" style="left:481px;top:164px;width:15px;height:165px;border-radius:2px;border:1px solid #B5C9F6;background:linear-gradient(to right,#C9D9FC,#D6E2FD 50%,#BCD0FA)"></div>
<div style="position:absolute;left:485px;top:242px;width:7px;height:1px;background:#A8BEF0"></div>
<div style="position:absolute;left:485px;top:244px;width:7px;height:1px;background:#A8BEF0"></div>
<div style="position:absolute;left:485px;top:246px;width:7px;height:1px;background:#A8BEF0"></div>
<div style="position:absolute;left:485px;top:248px;width:7px;height:1px;background:#A8BEF0"></div>
<div class="cell" style="left:42px;top:634px"><div class="chip" style="background:#D23C28"></div><div class="num">3</div></div>
<div class="cell" style="left:42px;top:669px"><div class="chip" style="background:#080808"></div><div class="num">2</div></div>
<div class="cell" style="left:42px;top:704px"><div class="chip" style="background:#D23C28"></div><div class="num">1</div></div>
<div class="cell" style="left:77px;top:634px"><div class="chip" style="background:#080808"></div><div class="num">6</div></div>
<div class="cell" style="left:77px;top:669px"><div class="chip" style="background:#D23C28"></div><div class="num">5</div></div>
<div class="cell" style="left:77px;top:704px"><div class="chip" style="background:#080808"></div><div class="num">4</div></div>
<div class="cell" style="left:112px;top:634px"><div class="chip" style="background:#D23C28"></div><div class="num">9</div></div>
<div class="cell" style="left:112px;top:669px"><div class="chip" style="background:#080808"></div><div class="num">8</div></div>
<div class="cell" style="left:112px;top:704px"><div class="chip" style="background:#D23C28"></div><div class="num">7</div></div>
<div class="cell" style="left:147px;top:634px"><div class="chip" style="background:#D23C28"></div><div class="num">12</div></div>
<div class="cell" style="left:147px;top:669px"><div class="chip" style="background:#080808"></div><div class="num">11</div></div>
<div class="cell" style="left:147px;top:704px"><div class="chip" style="background:#080808"></div><div class="num">10</div></div>
<div class="cell" style="left:182px;top:634px"><div class="chip" style="background:#080808"></div><div class="num">15</div></div>
<div class="cell" style="left:182px;top:669px"><div class="chip" style="background:#D23C28"></div><div class="num">14</div></div>
<div class="cell" style="left:182px;top:704px"><div class="chip" style="background:#080808"></div><div class="num">13</div></div>
<div class="cell" style="left:217px;top:634px"><div class="chip" style="background:#D23C28"></div><div class="num">18</div></div>
<div class="cell" style="left:217px;top:669px"><div class="chip" style="background:#080808"></div><div class="num">17</div></div>
<div class="cell" style="left:217px;top:704px"><div class="chip" style="background:#D23C28"></div><div class="num">16</div></div>
<div class="cell" style="left:252px;top:634px"><div class="chip" style="background:#D23C28"></div><div class="num">21</div></div>
<div class="cell" style="left:252px;top:669px"><div class="chip" style="background:#080808"></div><div class="num">20</div></div>
<div class="cell" style="left:252px;top:704px"><div class="chip" style="background:#D23C28"></div><div class="num">19</div></div>
<div class="cell" style="left:287px;top:634px"><div class="chip" style="background:#080808"></div><div class="num">24</div></div>
<div class="cell" style="left:287px;top:669px"><div class="chip" style="background:#D23C28"></div><div class="num">23</div></div>
<div class="cell" style="left:287px;top:704px"><div class="chip" style="background:#080808"></div><div class="num">22</div></div>
<div class="cell" style="left:322px;top:634px"><div class="chip" style="background:#D23C28"></div><div class="num">27</div></div>
<div class="cell" style="left:322px;top:669px"><div class="chip" style="background:#080808"></div><div class="num">26</div></div>
<div class="cell" style="left:322px;top:704px"><div class="chip" style="background:#D23C28"></div><div class="num">25</div></div>
<div class="cell" style="left:357px;top:634px"><div class="chip" style="background:#D23C28"></div><div class="num">30</div></div>
<div class="cell" style="left:357px;top:669px"><div class="chip" style="background:#080808"></div><div class="num">29</div></div>
<div class="cell" style="left:357px;top:704px"><div class="chip" style="background:#080808"></div><div class="num">28</div></div>
<div class="cell" style="left:392px;top:634px"><div class="chip" style="background:#080808"></div><div class="num">33</div></div>
<div class="cell" style="left:392px;top:669px"><div class="chip" style="background:#D23C28"></div><div class="num">32</div></div>
<div class="cell" style="left:392px;top:704px"><div class="chip" style="background:#080808"></div><div class="num">31</div></div>
<div class="cell" style="left:427px;top:634px"><div class="chip" style="background:#D23C28"></div><div class="num">36</div></div>
<div class="cell" style="left:427px;top:669px"><div class="chip" style="background:#080808"></div><div class="num">35</div></div>
<div class="cell" style="left:427px;top:704px"><div class="chip" style="background:#D23C28"></div><div class="num">34</div></div>
<div class="cell" style="left:7px;top:669px"></div>
<svg class="a" style="left:7px;top:669px" width="33" height="33"><ellipse cx="16.5" cy="16.5" rx="14" ry="11.5" fill="none" stroke="#8CD88C" stroke-width="1" stroke-dasharray="3 1"/><ellipse cx="16.5" cy="16.5" rx="3.2" ry="6.5" fill="none" stroke="#E8F0E8" stroke-width="2"/></svg>
<div class="t" style="left:505px;top:33px;font-size:11px;line-height:13px;color:#000;font-weight:normal;letter-spacing:-0.09px;">Ряд Фибоначчи=1 1 2 3 5 8 13 21 34 55 89 144 233 377 610</div>
<div class="t" style="left:505px;top:49px;font-size:11px;line-height:13px;color:#000;font-weight:normal;letter-spacing:-0.09px;">Ряд Tiers = 5 8 10 11 13 16 23 24 27 30 33 36</div>
<div class="t" style="left:505px;top:65px;font-size:11px;line-height:13px;color:#000;font-weight:normal;letter-spacing:-0.09px;">Ряд VdZ = 0 2 3 4 7 12 15 18 19 21 22 25 26 28 29 32 35</div>
<div class="a" style="left:0;top:0;width:1024px;height:60px;overflow:hidden">
<div class="t" style="left:822px;top:33px;font-size:11px;line-height:13px;color:#000;font-weight:normal;letter-spacing:-0.09px;">Ряд Мартингейл=1 2 4 8 16 32 64 128 256</div>
</div>
<div class="t" style="left:822px;top:49px;font-size:11px;line-height:13px;color:#000;font-weight:normal;letter-spacing:-0.09px;">Ряд Orph = 1 6 9 14 17 20 31 34</div>
<div class="t" style="left:822px;top:65px;font-size:11px;line-height:13px;color:#000;font-weight:normal;letter-spacing:-0.09px;">Ряд VdZ_zch = 0 3 12 15 26 32 35</div>
<div class="t" style="left:507px;top:83px;font:16px/20px 'Liberation Sans';letter-spacing:0.9px;-webkit-text-stroke:0.35px #000">Сумма на счете = 0</div>
<div class="edit" style="left:505px;top:103px;width:171px;height:21px"></div>
<div class="t" style="left:508px;top:107px;font-size:11px;line-height:13px;color:#000;font-weight:normal;">Автоставки</div>
<div class="combo-btn" style="left:659px;top:105px;width:15px;height:16px"></div>
<svg class="a" style="left:659px;top:105px" width="15" height="16"><path d="M4.0 6.0 L7.5 9.5 L11.0 6.0" fill="none" stroke="#4D6185" stroke-width="2"/></svg>
<div class="a" style="left:686px;top:82px;width:248px;height:40px;border-top:1px solid #ACA899;border-left:1px solid #ACA899;border-bottom:1px solid #fff;border-right:1px solid #fff"></div>
<div class="btn" style="left:691px;top:88px;width:87px;height:25px"></div>
<div class="t" style="left:691px;top:93px;font-size:11px;line-height:13px;color:#000;font-weight:normal;width:87px;text-align:center">Автоспин старт</div>
<div class="t" style="left:782px;top:89px;font-size:11px;line-height:13px;color:#000;font-weight:normal;">Временная</div>
<div class="t" style="left:782px;top:101px;font-size:11px;line-height:13px;color:#000;font-weight:normal;">задержка, мс</div>
<div class="a" style="left:854px;top:87px;width:72px;height:32px;background:#C0DCC0;border:1px solid #7F9DB9"></div>
<div class="t" style="left:857px;top:90px;font:20px/24px 'Liberation Sans'">0</div>
<div class="a" style="left:907px;top:90px;width:18px;height:12px;border:1px solid #1C4D8A;border-radius:2px;background:linear-gradient(#FFFFFF,#E6E4DC)"></div>
<svg class="a" style="left:0;top:0" width="1029" height="780"><path d="M912.0 98.0 L916.0 94.0 L920.0 98.0 Z" fill="#000"/></svg>
<div class="a" style="left:907px;top:103px;width:18px;height:13px;border:1px solid #1C4D8A;border-radius:2px;background:linear-gradient(#FFFFFF,#E6E4DC)"></div>
<svg class="a" style="left:0;top:0" width="1029" height="780"><path d="M912.0 107.5 L916.0 111.5 L920.0 107.5 Z" fill="#000"/></svg>
<div style="position:absolute;left:503px;top:134px;width:519px;height:1px;background:#ACA899"></div>
<div style="position:absolute;left:503px;top:135px;width:519px;height:1px;background:#FFFFFF"></div>
<div class="a" style="left:503px;top:162px;width:518px;height:420px;border:1px solid #919B9C;background:linear-gradient(#FCFCFE,#F4F3EE 60%,#F1EFE8)"></div>
<div class="tab" style="left:505px;top:144px;width:71px;height:18px"></div>
<div class="t" style="left:505px;top:147px;font-size:11px;line-height:13px;color:#000;font-weight:normal;width:71px;text-align:center">Анализатор</div>
<div class="tab" style="left:649px;top:144px;width:109px;height:18px"></div>
<div class="t" style="left:649px;top:147px;font-size:11px;line-height:13px;color:#000;font-weight:normal;width:109px;text-align:center">Частоты по числам</div>
<div class="tab" style="left:759px;top:144px;width:129px;height:18px"></div>
<div class="t" style="left:759px;top:147px;font-size:11px;line-height:13px;color:#000;font-weight:normal;width:129px;text-align:center">Функционал PsevdoMS</div>
<div class="a" style="left:890px;top:144px;width:99px;height:18px;overflow:hidden">
<div class="tab" style="left:0;top:0;width:120px;height:18px"></div>
<div class="t" style="left:6px;top:3px">Контроль банкролом</div>
</div>
<div class="tab act" style="left:576px;top:142px;width:73px;height:21px"></div>
<div style="position:absolute;left:576px;top:142px;width:73px;height:1px;background:#E68B2C;border-radius:3px 3px 0 0"></div>
<div style="position:absolute;left:576px;top:143px;width:73px;height:2px;background:#FFC73C"></div>
<div style="position:absolute;left:576px;top:145px;width:1px;height:18px;background:#919B9C"></div>
<div style="position:absolute;left:648px;top:145px;width:1px;height:18px;background:#919B9C"></div>
<div class="t" style="left:576px;top:145px;font-size:11px;line-height:13px;color:#000;font-weight:normal;width:73px;text-align:center">Автоставки</div>
<div class="a" style="left:990px;top:144px;width:32px;height:15px;border-radius:2px;background:linear-gradient(#D9E5FD,#B9CDF8)"></div>
<svg class="a" style="left:990px;top:144px" width="32" height="15"><path d="M10 4 L7 7.5 L10 11" fill="none" stroke="#4D6185" stroke-width="2"/><path d="M22 4 L25 7.5 L22 11" fill="none" stroke="#4D6185" stroke-width="2"/></svg>
<div class="a" style="left:508px;top:187px;width:506px;height:390px;border:1px solid #919B9C;background:linear-gradient(#FCFCFE,#F4F3EE 60%,#F1EFE8)"></div>
<div class="tab" style="left:511px;top:169px;width:82px;height:18px"></div>
<div class="t" style="left:511px;top:172px;font-size:11px;line-height:13px;color:#000;font-weight:normal;width:82px;text-align:center">Общие ставки</div>
<div class="tab" style="left:595px;top:169px;width:185px;height:18px"></div>
<div class="t" style="left:595px;top:172px;font-size:11px;line-height:13px;color:#000;font-weight:normal;width:185px;text-align:center">Наборы пользовательских ставок</div>
<div class="a" style="left:876px;top:169px;width:113px;height:18px;overflow:hidden">
<div class="tab" style="left:0;top:0;width:140px;height:18px"></div>
<div class="t" style="left:5px;top:3px">Исходные строки МД5</div>
</div>
<div class="tab act" style="left:781px;top:167px;width:95px;height:21px"></div>
<div style="position:absolute;left:781px;top:167px;width:95px;height:1px;background:#E68B2C;border-radius:3px 3px 0 0"></div>
<div style="position:absolute;left:781px;top:168px;width:95px;height:2px;background:#FFC73C"></div>
<div style="position:absolute;left:781px;top:170px;width:1px;height:18px;background:#919B9C"></div>
<div style="position:absolute;left:875px;top:170px;width:1px;height:18px;background:#919B9C"></div>
<div class="t" style="left:781px;top:170px;font-size:11px;line-height:13px;color:#000;font-weight:normal;width:95px;text-align:center">Дополнительно</div>
<div style="position:absolute;left:513px;top:192px;width:424px;height:109px;background:#A8CBF0"></div>
<div style="position:absolute;left:513px;top:231px;width:2px;height:33px;background:#006400"></div>
<div class="cell" style="left:516px;top:196px"><div class="chip" style="background:#D23C28"></div><div class="num">3</div></div>
<div class="cell" style="left:516px;top:231px"><div class="chip" style="background:#080808"></div><div class="num">2</div></div>
<div class="cell" style="left:516px;top:266px"><div class="chip" style="background:#D23C28"></div><div class="num">1</div></div>
<div class="cell" style="left:551px;top:196px"><div class="chip" style="background:#080808"></div><div class="num">6</div></div>
<div class="cell" style="left:551px;top:231px"><div class="chip" style="background:#D23C28"></div><div class="num">5</div></div>
<div class="cell" style="left:551px;top:266px"><div class="chip" style="background:#080808"></div><div class="num">4</div></div>
<div class="cell" style="left:586px;top:196px"><div class="chip" style="background:#D23C28"></div><div class="num">9</div></div>
<div class="cell" style="left:586px;top:231px"><div class="chip" style="background:#080808"></div><div class="num">8</div></div>
<div class="cell" style="left:586px;top:266px"><div class="chip" style="background:#D23C28"></div><div class="num">7</div></div>
<div class="cell" style="left:621px;top:196px"><div class="chip" style="background:#D23C28"></div><div class="num">12</div></div>
<div class="cell" style="left:621px;top:231px"><div class="chip" style="background:#080808"></div><div class="num">11</div></div>
<div class="cell" style="left:621px;top:266px"><div class="chip" style="background:#080808"></div><div class="num">10</div></div>
<div class="cell" style="left:656px;top:196px"><div class="chip" style="background:#080808"></div><div class="num">15</div></div>
<div class="cell" style="left:656px;top:231px"><div class="chip" style="background:#D23C28"></div><div class="num">14</div></div>
<div class="cell" style="left:656px;top:266px"><div class="chip" style="background:#080808"></div><div class="num">13</div></div>
<div class="cell" style="left:691px;top:196px"><div class="chip" style="background:#D23C28"></div><div class="num">18</div></div>
<div class="cell" style="left:691px;top:231px"><div class="chip" style="background:#080808"></div><div class="num">17</div></div>
<div class="cell" style="left:691px;top:266px"><div class="chip" style="background:#D23C28"></div><div class="num">16</div></div>
<div class="cell" style="left:726px;top:196px"><div class="chip" style="background:#D23C28"></div><div class="num">21</div></div>
<div class="cell" style="left:726px;top:231px"><div class="chip" style="background:#080808"></div><div class="num">20</div></div>
<div class="cell" style="left:726px;top:266px"><div class="chip" style="background:#D23C28"></div><div class="num">19</div></div>
<div class="cell" style="left:761px;top:196px"><div class="chip" style="background:#080808"></div><div class="num">24</div></div>
<div class="cell" style="left:761px;top:231px"><div class="chip" style="background:#D23C28"></div><div class="num">23</div></div>
<div class="cell" style="left:761px;top:266px"><div class="chip" style="background:#080808"></div><div class="num">22</div></div>
<div class="cell" style="left:796px;top:196px"><div class="chip" style="background:#D23C28"></div><div class="num">27</div></div>
<div class="cell" style="left:796px;top:231px"><div class="chip" style="background:#080808"></div><div class="num">26</div></div>
<div class="cell" style="left:796px;top:266px"><div class="chip" style="background:#D23C28"></div><div class="num">25</div></div>
<div class="cell" style="left:831px;top:196px"><div class="chip" style="background:#D23C28"></div><div class="num">30</div></div>
<div class="cell" style="left:831px;top:231px"><div class="chip" style="background:#080808"></div><div class="num">29</div></div>
<div class="cell" style="left:831px;top:266px"><div class="chip" style="background:#080808"></div><div class="num">28</div></div>
<div class="cell" style="left:866px;top:196px"><div class="chip" style="background:#080808"></div><div class="num">33</div></div>
<div class="cell" style="left:866px;top:231px"><div class="chip" style="background:#D23C28"></div><div class="num">32</div></div>
<div class="cell" style="left:866px;top:266px"><div class="chip" style="background:#080808"></div><div class="num">31</div></div>
<div class="cell" style="left:901px;top:196px"><div class="chip" style="background:#D23C28"></div><div class="num">36</div></div>
<div class="cell" style="left:901px;top:231px"><div class="chip" style="background:#080808"></div><div class="num">35</div></div>
<div class="cell" style="left:901px;top:266px"><div class="chip" style="background:#D23C28"></div><div class="num">34</div></div>
<div class="a" style="left:541px;top:222px;width:19px;height:17px;background:#fff"></div>
<div class="a" style="left:544px;top:224px;width:13px;height:13px;border:1px solid #1C5180;background:linear-gradient(135deg,#DCDCD7,#FFFFFF)"></div>
<svg class="a" style="left:544px;top:224px" width="13" height="13"><path d="M3 6 L5.5 8.5 L10 4" fill="none" stroke="#21A121" stroke-width="2"/></svg>
<div class="a" style="left:541px;top:257px;width:19px;height:17px;background:#fff"></div>
<div class="a" style="left:544px;top:259px;width:13px;height:13px;border:1px solid #1C5180;background:linear-gradient(135deg,#DCDCD7,#FFFFFF)"></div>
<div class="a" style="left:611px;top:222px;width:19px;height:17px;background:#fff"></div>
<div class="a" style="left:614px;top:224px;width:13px;height:13px;border:1px solid #1C5180;background:linear-gradient(135deg,#DCDCD7,#FFFFFF)"></div>
<div class="a" style="left:611px;top:257px;width:19px;height:17px;background:#fff"></div>
<div class="a" style="left:614px;top:259px;width:13px;height:13px;border:1px solid #1C5180;background:linear-gradient(135deg,#DCDCD7,#FFFFFF)"></div>
<svg class="a" style="left:614px;top:259px" width="13" height="13"><path d="M3 6 L5.5 8.5 L10 4" fill="none" stroke="#21A121" stroke-width="2"/></svg>
<div class="a" style="left:681px;top:222px;width:19px;height:17px;background:#fff"></div>
<div class="a" style="left:684px;top:224px;width:13px;height:13px;border:1px solid #1C5180;background:linear-gradient(135deg,#DCDCD7,#FFFFFF)"></div>
<div class="a" style="left:681px;top:257px;width:19px;height:17px;background:#fff"></div>
<div class="a" style="left:684px;top:259px;width:13px;height:13px;border:1px solid #1C5180;background:linear-gradient(135deg,#DCDCD7,#FFFFFF)"></div>
<svg class="a" style="left:684px;top:259px" width="13" height="13"><path d="M3 6 L5.5 8.5 L10 4" fill="none" stroke="#21A121" stroke-width="2"/></svg>
<div class="a" style="left:751px;top:222px;width:19px;height:17px;background:#fff"></div>
<div class="a" style="left:754px;top:224px;width:13px;height:13px;border:1px solid #1C5180;background:linear-gradient(135deg,#DCDCD7,#FFFFFF)"></div>
<svg class="a" style="left:754px;top:224px" width="13" height="13"><path d="M3 6 L5.5 8.5 L10 4" fill="none" stroke="#21A121" stroke-width="2"/></svg>
<div class="a" style="left:751px;top:257px;width:19px;height:17px;background:#fff"></div>
<div class="a" style="left:754px;top:259px;width:13px;height:13px;border:1px solid #1C5180;background:linear-gradient(135deg,#DCDCD7,#FFFFFF)"></div>
<div class="a" style="left:821px;top:222px;width:19px;height:17px;background:#fff"></div>
<div class="a" style="left:824px;top:224px;width:13px;height:13px;border:1px solid #1C5180;background:linear-gradient(135deg,#DCDCD7,#FFFFFF)"></div>
<div class="a" style="left:821px;top:257px;width:19px;height:17px;background:#fff"></div>
<div class="a" style="left:824px;top:259px;width:13px;height:13px;border:1px solid #1C5180;background:linear-gradient(135deg,#DCDCD7,#FFFFFF)"></div>
<svg class="a" style="left:824px;top:259px" width="13" height="13"><path d="M3 6 L5.5 8.5 L10 4" fill="none" stroke="#21A121" stroke-width="2"/></svg>
<div class="a" style="left:891px;top:222px;width:19px;height:17px;background:#fff"></div>
<div class="a" style="left:894px;top:224px;width:13px;height:13px;border:1px solid #1C5180;background:linear-gradient(135deg,#DCDCD7,#FFFFFF)"></div>
<div class="a" style="left:891px;top:257px;width:19px;height:17px;background:#fff"></div>
<div class="a" style="left:894px;top:259px;width:13px;height:13px;border:1px solid #1C5180;background:linear-gradient(135deg,#DCDCD7,#FFFFFF)"></div>
<svg class="a" style="left:894px;top:259px" width="13" height="13"><path d="M3 6 L5.5 8.5 L10 4" fill="none" stroke="#21A121" stroke-width="2"/></svg>
<div style="position:absolute;left:511px;top:399px;width:502px;height:1px;background:#ACA899"></div>
<div style="position:absolute;left:512px;top:575px;width:502px;height:1px;background:#ACA899"></div>
<div style="position:absolute;left:1013px;top:400px;width:1px;height:176px;background:#ACA899"></div>
<div style="position:absolute;left:507px;top:580px;width:512px;height:1px;background:#B0A898"></div>
<div style="position:absolute;left:1018px;top:166px;width:1px;height:415px;background:#B0A898"></div>
<div style="position:absolute;left:1012px;top:190px;width:1px;height:209px;background:#ACA899"></div>
<div class="btn" style="left:517px;top:316px;width:100px;height:35px"></div>
<svg class="a" style="left:527px;top:325px" width="18" height="18" viewBox="0 0 18 18"><circle cx="9" cy="9" r="8" fill="#10F050" stroke="#000" stroke-width="2"/><path d="M4.5 13 V8 L6 5.2 L7.5 8 V13 M4.5 9.8 H7.5" fill="none" stroke="#000" stroke-width="1.1"/><path d="M10.5 5.2 V9.5 H13.6 M13.6 5.2 V13" fill="none" stroke="#000" stroke-width="1.1"/></svg>
<div class="t" style="left:548px;top:321px;width:62px;text-align:center;font-size:11px;line-height:13px">Автоставка
каре</div>
<div class="btn" style="left:621px;top:316px;width:84px;height:35px"></div>
<svg class="a" style="left:629px;top:325px" width="18" height="18" viewBox="0 0 18 18"><circle cx="9" cy="9" r="8" fill="#10F050" stroke="#000" stroke-width="2"/><path d="M12.6 4.6 L7 8.2" stroke="#2838E0" stroke-width="2"/><path d="M6.2 6.6 L12.4 10.4" stroke="#2838E0" stroke-width="2.4"/><path d="M4 10.2 L10.6 13.6" stroke="#F010D0" stroke-width="2.6"/></svg>
<div class="t" style="left:647px;top:329px;width:54px;text-align:center;font-size:11px;line-height:13px">Очистить</div>
<div class="btn" style="left:709px;top:316px;width:108px;height:35px"></div>
<svg class="a" style="left:713px;top:325px" width="18" height="18" viewBox="0 0 18 18"><circle cx="9" cy="9" r="8" fill="#10F050" stroke="#000" stroke-width="2"/><path d="M4.1 5.6 H8.8 M6.5 3.4 V7.9" stroke="#FF1010" stroke-width="1.1"/><path d="M4.1 13.6 H8.8" stroke="#1020FF" stroke-width="1.1"/><path d="M10.4 5.4 Q14.5 9.3 10.4 13.4" fill="none" stroke="#000" stroke-width="1.1"/><path d="M10 4.5 L12.3 5 L10.6 7 Z M10 14.3 L12.3 13.8 L10.6 11.8 Z" fill="#000"/></svg>
<div class="t" style="left:733px;top:321px;width:82px;text-align:center;font-size:11px;line-height:13px">Инвертировать
<span style="position:relative;left:7px">выбор</span></div>
<div class="btn" style="left:518px;top:357px;width:91px;height:35px"></div>
<svg class="a" style="left:522px;top:366px" width="18" height="18" viewBox="0 0 18 18"><circle cx="9" cy="9" r="8" fill="#10F050" stroke="#000" stroke-width="2"/><path d="M2 8.6 H7.9 M5.6 6.6 L7.9 8.6 L5.6 10.6" fill="none" stroke="#FF2010" stroke-width="1"/><path d="M8.6 13 V5.5 H10.8 V13 M12.6 5.5 V13 M14.8 5.5 V13 M12.6 9.1 H14.8" fill="none" stroke="#000" stroke-width="1.1"/></svg>
<div class="t" style="left:541px;top:362px;width:65px;text-align:center;font-size:11px;line-height:13px">Передать в
поле ПН</div>
<div class="grp" style="left:825px;top:322px;width:89px;height:47px"></div>
<div class="gt" style="left:832px;top:316px;background:#F8F7F4">Коэфф. умнож.</div>
<div class="a" style="left:844px;top:331px;width:57px;height:31px;background:#C0DCC0;border:1px solid #7F9DB9"></div>
<div class="t" style="left:847px;top:334px;font:19px/24px 'Liberation Sans'">9</div>
<div class="a" style="left:882px;top:334px;width:16px;height:12px;border:1px solid #1C4D8A;border-radius:2px;background:linear-gradient(#FFFFFF,#E6E4DC)"></div>
<svg class="a" style="left:0;top:0" width="1029" height="780"><path d="M886.0 342.0 L890.0 338.0 L894.0 342.0 Z" fill="#000"/></svg>
<div class="a" style="left:882px;top:348px;width:16px;height:12px;border:1px solid #1C4D8A;border-radius:2px;background:linear-gradient(#FFFFFF,#E6E4DC)"></div>
<svg class="a" style="left:0;top:0" width="1029" height="780"><path d="M886.0 352.0 L890.0 356.0 L894.0 352.0 Z" fill="#000"/></svg>
<div class="t" style="left:647px;top:542px;font-size:11px;line-height:13px;color:#000;font-weight:normal;">Эта часть дорабатывается пока.</div>
<div style="position:absolute;left:503px;top:585px;width:519px;height:1px;background:#ACA899"></div>
<div style="position:absolute;left:503px;top:586px;width:519px;height:1px;background:#FFFFFF"></div>
<div class="a" style="left:503px;top:607px;width:518px;height:136px;border:1px solid #919B9C;background:linear-gradient(#FCFCFE,#F4F3EE)"></div>
<div class="tab" style="left:505px;top:590px;width:220px;height:17px"></div>
<div class="t" style="left:505px;top:593px;font-size:11px;line-height:13px;color:#000;font-weight:normal;width:220px;text-align:center">Частота - Zero, шансы, дюжины, колонки</div>
<div class="tab" style="left:727px;top:590px;width:158px;height:17px"></div>
<div class="t" style="left:727px;top:593px;font-size:11px;line-height:13px;color:#000;font-weight:normal;width:158px;text-align:center">Частота - сиклайны, сектора</div>
<div class="tab act" style="left:885px;top:587px;width:45px;height:21px"></div>
<div style="position:absolute;left:885px;top:587px;width:45px;height:1px;background:#E68B2C;border-radius:3px 3px 0 0"></div>
<div style="position:absolute;left:885px;top:588px;width:45px;height:2px;background:#FFC73C"></div>
<div style="position:absolute;left:885px;top:590px;width:1px;height:18px;background:#919B9C"></div>
<div style="position:absolute;left:929px;top:590px;width:1px;height:18px;background:#919B9C"></div>
<div class="t" style="left:885px;top:590px;font-size:11px;line-height:13px;color:#000;font-weight:normal;width:45px;text-align:center">MD5  </div>
<div class="btn" style="left:508px;top:617px;width:71px;height:90px;display:flex;align-items:center;justify-content:center;text-align:center;font-size:11px;line-height:13px;white-space:pre">Очистка
Вставка
Расчет MD5</div>
<div class="btn" style="left:583px;top:617px;width:79px;height:18px;display:flex;align-items:center;justify-content:center;text-align:center;font-size:11px;line-height:13px;white-space:pre">Очистить</div>
<div class="btn" style="left:583px;top:641px;width:79px;height:31px;display:flex;align-items:center;justify-content:center;text-align:center;font-size:11px;line-height:13px;white-space:pre">Очистить и
вставить</div>
<div class="btn" style="left:583px;top:676px;width:79px;height:31px;display:flex;align-items:center;justify-content:center;text-align:center;font-size:11px;line-height:13px;white-space:pre">Расчет MD5</div>
<div class="btn" style="left:511px;top:712px;width:148px;height:28px;display:flex;align-items:center;justify-content:center;text-align:center;font-size:11px;line-height:12px;white-space:pre">Очистить и  вставить
во вспом. строку</div>
<div class="t" style="left:667px;top:612px;font-size:11px;line-height:13px;color:#000;font-weight:normal;">Исходная строка</div>
<div class="edit" style="left:667px;top:627px;width:285px;height:20px"></div>
<div class="t" style="left:667px;top:657px;font-size:11px;line-height:13px;color:#000;font-weight:normal;">Выходная строка MD5</div>
<div class="a" style="left:803px;top:654px;width:13px;height:13px;border:1px solid #1C5180;background:linear-gradient(135deg,#DCDCD7,#FFFFFF)"></div>
<div class="t" style="left:820px;top:654px;font-size:11px;line-height:13px;color:#000;font-weight:normal;">регистр  - маленький</div>
<div class="edit" style="left:667px;top:672px;width:285px;height:20px"></div>
<div class="t" style="left:667px;top:697px;font-size:11px;line-height:13px;color:#000;font-weight:normal;">Вспомогательная строка: сюда можно все скопировать</div>
<div class="edit" style="left:667px;top:712px;width:285px;height:20px"></div>
<div class="btn" style="left:956px;top:628px;width:23px;height:24px"></div>
<svg class="a" style="left:959px;top:631px" width="18" height="18" viewBox="0 0 18 18"><circle cx="9" cy="9" r="8" fill="#10F050" stroke="#000" stroke-width="2"/><path d="M4.2 7.7 V4.2 L6.1 6.5 L8 4.2 V7.7" fill="none" stroke="#000" stroke-width="1"/><path d="M9.6 8.3 H14.4 M10.3 8.3 L11.9 4.2 L13.7 8.3" fill="none" stroke="#000" stroke-width="1"/><path d="M9.6 9.4 H6.4 L6.1 11.3 H8.8 Q9.8 11.5 9.6 12.6 Q9.3 13.7 7.8 13.7 H5.9" fill="none" stroke="#000" stroke-width="1"/></svg>
<div class="btn" style="left:956px;top:708px;width:23px;height:24px"></div>
<svg class="a" style="left:959px;top:711px" width="18" height="18" viewBox="0 0 18 18"><circle cx="9" cy="9" r="8" fill="#10F050" stroke="#000" stroke-width="2"/><path d="M4.2 7.7 V4.2 L6.1 6.5 L8 4.2 V7.7" fill="none" stroke="#000" stroke-width="1"/><path d="M9.6 8.3 H14.4 M10.3 8.3 L11.9 4.2 L13.7 8.3" fill="none" stroke="#000" stroke-width="1"/><path d="M9.6 9.4 H6.4 L6.1 11.3 H8.8 Q9.8 11.5 9.6 12.6 Q9.3 13.7 7.8 13.7 H5.9" fill="none" stroke="#000" stroke-width="1"/><path d="M10.5 9.5 L13.5 11.8 L10.5 14 Z" fill="#1030FF"/></svg>
<div style="position:absolute;left:4px;top:748px;width:1021px;height:28px;background:#ECE9D8"></div>
<div style="position:absolute;left:4px;top:748px;width:1021px;height:1px;background:#E2DED0"></div>
<div class="t" style="left:5px;top:757px;font-size:11px;line-height:13px;color:#000;font-weight:normal;letter-spacing:-0.1px">В последнем спине выпало: 11 черное</div>
<div style="position:absolute;left:702px;top:751px;width:1px;height:22px;background:#ACA899"></div>
<div style="position:absolute;left:703px;top:751px;width:1px;height:22px;background:#FFFFFF"></div>
<div style="position:absolute;left:822px;top:751px;width:1px;height:22px;background:#ACA899"></div>
<div style="position:absolute;left:823px;top:751px;width:1px;height:22px;background:#FFFFFF"></div>
<div class="t" style="left:708px;top:757px;font-size:11px;line-height:13px;color:#000;font-weight:normal;">Автосмещение : 5</div>
<div class="t" style="left:827px;top:757px;font-size:11px;line-height:13px;color:#000;font-weight:normal;">Исходное: 15</div>
<div style="position:absolute;left:1020px;top:764px;width:2px;height:2px;background:#fff"></div>
<div style="position:absolute;left:1019px;top:763px;width:2px;height:2px;background:#ACA899"></div>
<div style="position:absolute;left:1016px;top:768px;width:2px;height:2px;background:#fff"></div>
<div style="position:absolute;left:1015px;top:767px;width:2px;height:2px;background:#ACA899"></div>
<div style="position:absolute;left:1020px;top:768px;width:2px;height:2px;background:#fff"></div>
<div style="position:absolute;left:1019px;top:767px;width:2px;height:2px;background:#ACA899"></div>
<div style="position:absolute;left:1012px;top:772px;width:2px;height:2px;background:#fff"></div>
<div style="position:absolute;left:1011px;top:771px;width:2px;height:2px;background:#ACA899"></div>
<div style="position:absolute;left:1016px;top:772px;width:2px;height:2px;background:#fff"></div>
<div style="position:absolute;left:1015px;top:771px;width:2px;height:2px;background:#ACA899"></div>
<div style="position:absolute;left:1020px;top:772px;width:2px;height:2px;background:#fff"></div>
<div style="position:absolute;left:1019px;top:771px;width:2px;height:2px;background:#ACA899"></div></body></html>
